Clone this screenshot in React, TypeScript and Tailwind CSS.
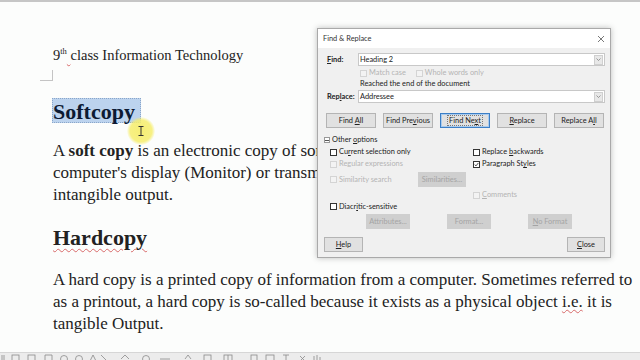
import React from "react";

const Cb = ({ checked = false, disabled = false }: { checked?: boolean; disabled?: boolean }) => (
  <span
    className={
      "inline-flex items-center justify-center w-[7px] h-[7px] border mr-[2px] shrink-0 " +
      (disabled ? "border-[#d4d4d4] bg-[#f3f3f3]" : "border-[#333] bg-white")
    }
  >
    {checked && (
      <svg width="5" height="5" viewBox="0 0 5 5">
        <path d="M0.6 2.5 L2 3.9 L4.4 0.9" stroke="#222" strokeWidth="0.8" fill="none" />
      </svg>
    )}
  </span>
);

const Btn = ({ children, w, focus = false }: { children: React.ReactNode; w: string; focus?: boolean }) => (
  <div
    className={
      "h-[15px] flex items-center justify-center bg-[#e1e1e1] border text-[#222] " +
      w +
      (focus ? " border-[#3c7fc6] ring-1 ring-inset ring-[#a9cbee]" : " border-[#b4b4b4]")
    }
  >
    <span>{children}</span>
  </div>
);

const GBtn = ({ children, w }: { children: React.ReactNode; w: string }) => (
  <div className={"h-[15px] flex items-center justify-center bg-[#cfcfcf] text-[#a4a4a4] " + w}>
    <span>{children}</span>
  </div>
);

const Dropdown = ({ value }: { value: string }) => (
  <div className="flex-1 h-[13px] bg-white border border-[#c8c8c8] flex items-center pl-[1px] pr-[1px] text-[#222]">
    <span className="flex-1">{value}</span>
    <span className="w-[9px] h-[10px] bg-[#e8e8e8] border border-[#cfcfcf] flex items-center justify-center">
      <svg width="5" height="3" viewBox="0 0 5 3">
        <path d="M0.5 0.5 L2.5 2.5 L4.5 0.5" stroke="#777" strokeWidth="0.7" fill="none" />
      </svg>
    </span>
  </div>
);

function Dialog() {
  return (
    <div className="absolute left-[317px] top-[28px] w-[294px] h-[230px] bg-[#f0f0f0] border border-[#a9a9a9] shadow-[0_0_6px_rgba(0,0,0,0.25)] font-['Lato','Noto_Sans',sans-serif] text-[7.4px] leading-none text-[#222]">
      <div className="h-[19px] bg-white flex items-center justify-between pl-[5px] pr-[5px]">
        <span className="text-[#333]">Find &amp; Replace</span>
        <svg width="8" height="8" viewBox="0 0 8 8">
          <path d="M1 1 L7 7 M7 1 L1 7" stroke="#555" strokeWidth="0.8" />
        </svg>
      </div>
      <div className="pl-[9px] pr-[5px] pt-[5px]">
        <div className="flex items-center h-[13px]">
          <span className="w-[31px] font-bold">
            <span className="underline">F</span>ind:
          </span>
          <Dropdown value="Heading 2" />
        </div>
        <div className="flex items-center h-[12px] mt-[1px] pl-[33px] text-[#b4b4b4]">
          <Cb disabled />
          <span>Match case</span>
          <span className="w-[10px]" />
          <Cb disabled />
          <span>Whole words only</span>
        </div>
        <div className="flex items-center h-[10px] pl-[33px]">
          <span>Reached the end of the document</span>
        </div>
        <div className="flex items-center h-[13px] mt-[1px]">
          <span className="w-[31px] font-bold">
            Rep<span className="underline">l</span>ace:
          </span>
          <Dropdown value="Addressee" />
        </div>
        <div className="flex gap-[7px] mt-[10px] -ml-[1px]">
          <Btn w="w-[50px]">
            Find <span className="underline">A</span>ll
          </Btn>
          <Btn w="w-[50px]">
            Find Pre<span className="underline">v</span>ious
          </Btn>
          <Btn w="w-[50px]" focus>
            <span className="outline outline-1 outline-dotted outline-[#777] px-[1px]">
              Find Ne<span className="underline">x</span>t
            </span>
          </Btn>
          <Btn w="w-[50px]">
            <span className="underline">R</span>eplace
          </Btn>
          <Btn w="w-[50px]">
            Replace A<span className="underline">l</span>l
          </Btn>
        </div>
        <div className="flex items-center h-[12px] mt-[6px] -ml-[3px]">
          <span className="w-[6px] h-[6px] border border-[#999] bg-white flex items-center justify-center mr-[2px]">
            <span className="w-[4px] h-[0.8px] bg-[#555]" />
          </span>
          <span>
            Other <span className="underline">o</span>ptions
          </span>
        </div>
        <div className="pl-[3px]">
          <div className="flex h-[12px] items-center">
            <div className="w-[143px] flex items-center">
              <Cb />
              <span>
                Cu<span className="underline">r</span>rent selection only
              </span>
            </div>
            <div className="flex items-center">
              <Cb />
              <span>
                Replace <span className="underline">b</span>ackwards
              </span>
            </div>
          </div>
          <div className="flex h-[12px] items-center">
            <div className="w-[143px] flex items-center text-[#b4b4b4]">
              <Cb disabled />
              <span>Regular expressions</span>
            </div>
            <div className="flex items-center">
              <Cb checked />
              <span>
                Paragraph St<span className="underline">y</span>les
              </span>
            </div>
          </div>
          <div className="flex h-[15px] items-center mt-[2px] text-[#b4b4b4]">
            <div className="w-[88px] flex items-center">
              <Cb disabled />
              <span>Similarity search</span>
            </div>
            <GBtn w="w-[48px]">Similarities...</GBtn>
          </div>
          <div className="flex h-[12px] items-center mt-[2px] text-[#b4b4b4]">
            <div className="w-[143px]" />
            <div className="flex items-center">
              <Cb disabled />
              <span>
                <span className="underline">C</span>omments
              </span>
            </div>
          </div>
          <div className="flex h-[11px] items-center">
            <Cb />
            <span>
              Diacr<span className="underline">i</span>tic-sensitive
            </span>
          </div>
          <div className="flex h-[15px] mt-[2px] pl-[36px] gap-[37px]">
            <GBtn w="w-[44px]">Attributes...</GBtn>
            <GBtn w="w-[44px]">Format...</GBtn>
            <GBtn w="w-[44px]">
              <span className="underline">N</span>o Format
            </GBtn>
          </div>
        </div>
        <div className="flex justify-between h-[15px] mt-[8px] -ml-[3px]">
          <Btn w="w-[39px]">
            <span className="underline">H</span>elp
          </Btn>
          <Btn w="w-[38px]">
            <span className="underline">C</span>lose
          </Btn>
        </div>
      </div>
    </div>
  );
}

function Toolbar() {
  return (
    <div className="h-[8px] bg-[#ececec] border-t border-[#d6d6d6] flex items-start">
      <svg width="330" height="8" viewBox="0 0 330 8">
        <g stroke="#8a8a8a" strokeWidth="0.8" fill="none">
          <path d="M2 2 V8 M4 2 V8" />
          <rect x="12" y="2" width="7" height="7" />
          <rect x="28" y="2" width="7" height="7" />
          <path d="M45 2 H52 V8 M45 2 V8" />
          <circle cx="64" cy="6" r="3.5" />
          <circle cx="79" cy="6" r="3.5" />
          <path d="M90 8 L93 2 L96 8" />
          <path d="M101 2 L107 8" />
          <path d="M121 6 L125 2 L129 6" />
          <circle cx="146" cy="6" r="3.5" />
          <path d="M160 6 H170" />
          <path d="M185 6 L188 2 L191 6" />
          <rect x="204" y="2" width="7" height="7" />
          <rect x="224" y="2" width="8" height="7" />
          <path d="M228 2 V8" />
          <rect x="251" y="2" width="6" height="7" />
          <rect x="266" y="2" width="8" height="7" />
          <path d="M283 2 H289 M286 2 V8" />
          <path d="M300 3 L305 8 M305 3 L300 8" />
          <path d="M314 3 V8 M317 2 V8 M320 4 V8" />
        </g>
      </svg>
      <div className="flex-1" />
    </div>
  );
}

export default function App() {
  const serif = "font-['Liberation_Serif','Times_New_Roman',serif]";
  return (
    <div className="relative w-[640px] h-[360px] overflow-hidden bg-[#fcfdfc] flex flex-col">
      <div className="h-[2px] bg-[#c6c6c6] shrink-0" />
      <div className={"flex-1 relative pl-[53px] pt-[43px] text-[#222] " + serif}>
        <div className="text-[14.5px] leading-[20px] h-[20px] whitespace-nowrap">
          9<span className="text-[8.5px] leading-none relative -top-[6px]">th</span>
          <span className="underline decoration-wavy decoration-[#d86a6a] decoration-1 underline-offset-[2px]">&nbsp;</span>
          class Information Technology
        </div>
        {/* text boundary corner */}
        <div className="h-[32px] relative">
          <div className="absolute left-[-13px] top-[5px] w-[13px] h-[11px] border-r border-b border-[#c4c4c4]" />
        </div>
        <div className="text-[22px] leading-[28px] font-bold h-[28px] relative">
          <span className="inline-block h-[25px] mt-[1px] leading-[26px] bg-[#bcd3ee] border border-dotted border-[#8aa6c9] pr-[5px] -ml-[1px] text-[#0c1a33]">
            Softcopy
          </span>
          {/* mouse highlight */}
          <div className="absolute left-[74px] top-[20px] w-[28px] h-[28px] rounded-full bg-[radial-gradient(circle,rgba(246,238,110,0.95)_0%,rgba(246,238,110,0.85)_55%,rgba(246,238,110,0)_72%)]" />
          <svg className="absolute left-[85px] top-[29px]" width="6" height="10" viewBox="0 0 6 10">
            <path d="M0.5 0.5 H5.5 M3 0.5 V9.5 M0.5 9.5 H5.5" stroke="#333" strokeWidth="1" fill="none" />
          </svg>
        </div>
        <div className="text-[17px] leading-[22px] mt-[15px] whitespace-nowrap">
          <div>
            A <b>soft copy</b> is an electronic copy of some type of data, such as a file viewed on a
          </div>
          <div>computer's display (Monitor) or transmitted as an email attachment. It is</div>
          <div>intangible output.</div>
        </div>
        <div className="text-[22px] leading-[28px] font-bold mt-[18px]">
          <span className="underline decoration-wavy decoration-[#d86a6a] decoration-1 underline-offset-[3px]">Hardcopy</span>
        </div>
        <div className="text-[17px] leading-[22px] mt-[17px] whitespace-nowrap">
          <div>A hard copy is a printed copy of information from a computer. Sometimes referred to</div>
          <div>
            as a printout, a hard copy is so-called because it exists as a physical object{" "}
            <span className="underline decoration-wavy decoration-[#d86a6a] decoration-1 underline-offset-[2px]">i.e.</span> it is
          </div>
          <div>tangible Output.</div>
        </div>
      </div>
      <div className="shrink-0">
        <Toolbar />
      </div>
      <Dialog />
    </div>
  );
}
